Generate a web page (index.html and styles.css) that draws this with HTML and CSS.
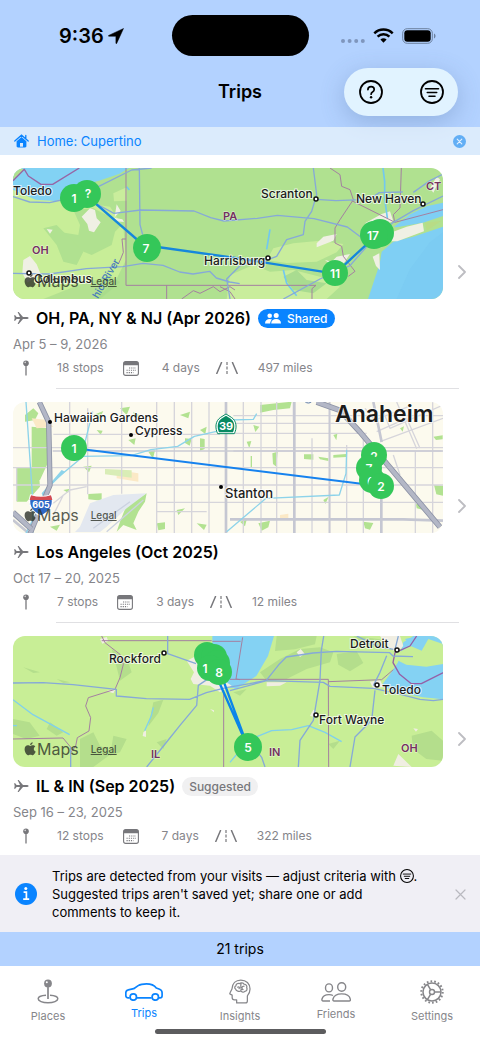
FILE: index.html
```html
<!DOCTYPE html>
<html lang="en">
<head>
<meta charset="utf-8">
<meta name="viewport" content="width=device-width, initial-scale=1">
<title>Trips</title>
<link rel="stylesheet" href="styles.css">
</head>
<body>
<svg class="sprite" aria-hidden="true">
  <symbol id="plane" viewBox="0 0 16 16"><path d="M15.600 8c0 .7-1 1-2.200 1H10L5.700 14H4.600L7 9H3.600L2.200 10.800H1.100L1.700 8 1.100 5.200H2.200L3.600 7H7L4.600 2H5.700L10 7h3.400c1.200 0 2.200.3 2.200 1z" fill="currentColor"/></symbol>
  <symbol id="pin" viewBox="0 0 8 16"><circle cx="4" cy="3.200" r="2.800" fill="currentColor"/><path d="M4 5v10.500" stroke="currentColor" stroke-width="1.300"/><circle cx="3.200" cy="2.400" r=".8" fill="#fff" opacity=".7"/></symbol>
  <symbol id="calendar" viewBox="0 0 16 15"><rect x=".6" y=".6" width="14.800" height="13.800" rx="2.200" fill="none" stroke="currentColor" stroke-width="1.100"/><path d="M.6 4.200V2.800C.6 1.400 1.400.6 2.800.6h10.400c1.400 0 2.200.8 2.200 2.200v1.400z" fill="currentColor"/><path d="M6 7h7M3.500 9.300H13M3.500 11.600h7" stroke="currentColor" stroke-width="1.100" stroke-dasharray="1.200 1"/></symbol>
  <symbol id="road" viewBox="0 0 22 12"><path d="M5.500.5.8 11.500M16.500.5l4.700 11" stroke="currentColor" stroke-width="1.500" stroke-linecap="round"/><path d="M11 0v3M11 4.500v3M11 9v3" stroke="currentColor" stroke-width="1.200"/></symbol>
  <symbol id="chevron" viewBox="0 0 8 14"><path d="m1 1 6 6-6 6" fill="none" stroke="currentColor" stroke-width="1.800" stroke-linecap="round" stroke-linejoin="round"/></symbol>
  <symbol id="filter" viewBox="0 0 24 24"><circle cx="12" cy="12" r="11" fill="none" stroke="currentColor" stroke-width="1.800"/><path d="M5.500 8.700h13M7.300 12.500h9.400M9 16.300h6" stroke="currentColor" stroke-width="1.600" stroke-linecap="round"/></symbol>
  <symbol id="apple" viewBox="0 0 12 14"><path d="M8.700.2c.1 1.400-1.200 2.800-2.600 2.800C5.900 1.600 7.300.3 8.700.2zM6.200 3.900c.7 0 1.500-.7 2.700-.7 1 0 1.900.5 2.400 1.300-2.200 1.200-1.800 4.200.4 5.100-.5 1.400-1.700 3.600-2.900 3.600-.9 0-1.300-.5-2.400-.5s-1.500.5-2.400.5C2.500 13.200.6 10.100.6 7.300c0-2.600 1.600-4.100 3.200-4.100 1.100 0 1.800.7 2.400.7z" fill="currentColor"/></symbol>
</svg>

<div class="app">
  <header class="top">
    <div class="status">
      <div class="status-time"><span>9:36</span>
        <svg width="16" height="16" viewBox="0 0 16 16"><path d="M15.500.5 8.700 15.400c-.2.400-.8.300-.8-.2V8.300L.9 8.200c-.6 0-.7-.6-.2-.8z" fill="#000" stroke="#000" stroke-width=".5" stroke-linejoin="round"/></svg>
      </div>
      <div class="island"></div>
      <div class="status-icons">
        <svg width="24" height="6" viewBox="0 0 24 6" fill="#7f96bd"><circle cx="2" cy="3" r="2"/><circle cx="8.600" cy="3" r="2"/><circle cx="15.200" cy="3" r="2"/><circle cx="21.800" cy="3" r="2"/></svg>
        <svg width="21" height="15" viewBox="0 0 21 15"><path d="M1.300 5.300a13.300 13.300 0 0 1 18.400 0M4.600 8.700a8.500 8.500 0 0 1 11.800 0" fill="none" stroke="#000" stroke-width="2.500"/><path d="M7.400 11.600a4.500 4.500 0 0 1 6.200 0L10.500 14.800z"/></svg>
        <svg width="34" height="16" viewBox="0 0 34 16"><rect x=".7" y=".7" width="29.600" height="14.600" rx="4.500" fill="none" stroke="#6c819f" stroke-width="1"/><rect x="2.300" y="2.300" width="26.400" height="11.400" rx="3"/><path d="M32 5.500c2 .8 2 4.200 0 5z" fill="#6c819f"/></svg>
      </div>
    </div>
    <div class="nav">
      <h1>Trips</h1>
      <div class="nav-actions">
        <button type="button" aria-label="Help"><svg width="24" height="24" viewBox="0 0 24 24"><circle cx="12" cy="12" r="11" fill="none" stroke="#000" stroke-width="1.800"/><path d="M8.900 9.600c.1-1.900 1.400-2.900 3.200-2.900s3.100 1.100 3.100 2.700c0 1.300-.7 1.900-1.700 2.600-1 .6-1.400 1.100-1.400 2.200" fill="none" stroke="#000" stroke-width="1.700" stroke-linecap="round"/><circle cx="12.100" cy="17.200" r="1.200"/></svg></button>
        <button type="button" aria-label="Filter criteria"><svg width="24" height="24"><use href="#filter"/></svg></button>
      </div>
    </div>
  </header>

  <div class="home-bar">
    <svg width="15" height="14" viewBox="0 0 15 14"><path d="M.8 7 7.500 1.200 14.200 7M11.800 1.500v3" fill="none" stroke="currentColor" stroke-width="1.300" stroke-linecap="round"/><path d="M2.600 7.300 7.500 3.100l4.900 4.200V12c0 1-.4 1.400-1.400 1.400H4c-1 0-1.400-.4-1.400-1.400z" fill="currentColor"/><path d="M6 9h3v3.700H6z" fill="#dceafb"/></svg>
    <a href="#home">Home: Cupertino</a>
    <button type="button" aria-label="Clear home filter"><svg width="13" height="13" viewBox="0 0 13 13"><circle cx="6.500" cy="6.500" r="6.500" fill="#62aef5"/><path d="m4.200 4.200 4.600 4.600m0-4.600L4.200 8.800" stroke="#e4f1ff" stroke-width="1.100" stroke-linecap="round"/></svg></button>
  </div>

  <main>
    <ul class="trips">
      <li>
        <div class="trip">
          <div class="trip-body">
            <div class="map">
              <svg class="map-art" viewBox="0 0 430 131" role="img" aria-label="Route map across Ohio, Pennsylvania, New York and New Jersey">
                <g transform="scale(.33333) translate(-39 -24)" fill="none" stroke-linejoin="round">
                  <path fill="#b0e190" d="M39 24h1290v393H39z"/>
                  <path fill="#c8ee98" d="M39 85 190 120l140 20 40 60 8 100-30 60-60 57H39z"/>
                  <path fill="#b0e190" d="m220 150 60-5 40 20 45 30-20 20-10 40-60 30-50-20-50-15-40-45 40 10 60 10 5-30z"/>
                  <path fill="#b0e190" d="m130 205 40-10 30 30 50 50-20 40-40-10-20-50z"/>
                  <path fill="#c9ed9c" d="m340 100 40-18v40l-38 2z"/>
                  <path fill="#a5d98a" d="M130 417l100-40 100-30 30 20-60 50z" opacity=".6"/>
                  <path fill="#c9ed9c" d="m820 265 60-15 80-8 70 10-20 25-60 28-90 4-60-8zM690 345l70-30 50 20 70-5 80 20 60 30-40 37H680z"/>
                  <path fill="#a9dc90" d="m850 350 40-20 30 30 60 10-40 30-60-10z"/>
                  <path fill="#82d2f4" d="M39 24h348l-30 18-60 20-60 15-50 38-20 8-60-4-68-30z"/>
                  <path fill="#b0e190" d="M39 24h22l12 6-34 30z"/>
                  <path fill="#7fcff4" d="m1145 275 35-30 60-15 89-30v217h-225l20-60 15-45zM1182 200l50-38 50-24 47-10v40l-60 20-80 14z"/>
                  <path fill="#73c2ee" d="m1190 417 40-90 60-80 39-30v200z" opacity=".25"/>
                  <path fill="#f0f0e4" d="m1180 215 40-15 48-12 4 26-80 30h-22zM1095 190l50-28 25-8 10 30-30 10-30 20zM245 170l25-25 15 5 5 25 12 12-20 30-15-5-5-20zM70 300l20-12 20 25 12 30-40 25-15-30zM350 133l12 20-20 20 25 5 5 8-30-3zM1118 290l20-10 2 50-12-12zM950 250l20-20 40-8-10 20-50 20zM140 207l18 2-8 12zM1290 85l20-35 10 8-20 40zM975 300l20 5 15-15 40-8-20 30-30 8z"/>
                  <path fill="#b8dc86" d="m1275 188 50-6-45 30z"/>
                  <g stroke="#72c8ef" stroke-width="5"><path d="m1149 24 5 40v50l8 60M810 208l-10 60M850 330l10 40 30 37M380 80l8 10"/></g>
                  <g stroke="#a47fa0" stroke-width="3"><path d="M378 24v352h570M378 237h-12l4 40-8 20-7 15M500 376v41M545 417l35-25 20 8 40-20 20 15 30-15 15 10M990 24l30 20 5 35 25 10 10 30-40 60-15 25v45l20 10 5 30 35 45-20 15M1055 122l130 65 144-38M1204 24l-4 120-20 20 4 22M948 376l-12 10v31M660 380l30 15 15 22"/></g>
                  <path d="M39 62l34-34 12 20 38 25h35l80-49" stroke="#9765a5" stroke-width="4"/>
                  <g stroke="#86a9d8" stroke-width="4"><path d="m39 110 50 16 60 2 35-8M295 80l100-50 60-6M418 24l2 170 8 30M290 132l52 28 80-10 160 3 50 20 40 10 100-8 60-9 110 10 100 25 40 30M39 340l110 2 110-16 110-6 60-10 60 6 50 20 40 6 50-8 20 20 40 12 30 5M940 24l10 80-15 50-20 30-5 40-50 15-30 50-40 15M948 118l60 4 100-4 30-20 70-2M1180 187l60-35 89-44M690 417l-10-60 40-40 60-18M850 417l110-60 90-40 70-80 60-50M1240 97l50-35 39-20"/></g>
                  <path d="m280 125 150 130 270 38 305 48 135-125" stroke="#1687dc" stroke-width="7"/>
                </g>
                <g class="river"><text transform="translate(85 131) rotate(-60)">hio-River</text></g>
                <g class="city">
                  <text x="0" y="27">Toledo</text><text x="248" y="30">Scranton</text><text x="343" y="35">New Haven</text><text x="191" y="97">Harrisburg</text><text x="21" y="115">Columbus</text>
                </g>
                <g class="town-dot"><circle cx="303" cy="31" r="2"/><circle cx="410" cy="36" r="2"/><circle cx="255" cy="90" r="2"/><circle cx="16" cy="105" r="2"/></g>
                <g class="state"><text x="19" y="86">OH</text><text x="210" y="52">PA</text><text x="413" y="22">CT</text></g>
                <g class="stop">
                  <circle cx="74" cy="26" r="14"/><circle cx="61" cy="30" r="14"/><text x="75" y="30">?</text><text x="61" y="35">1</text>
                  <circle cx="134" cy="80" r="14"/><text x="133" y="85">7</text>
                  <circle cx="322" cy="105" r="13"/><text x="322" y="110">11</text>
                  <circle cx="367" cy="65" r="14"/><circle cx="361" cy="67" r="14"/><text x="360" y="72">17</text>
                </g>
              </svg>
              <div class="map-credit"><svg width="12" height="14"><use href="#apple"/></svg><span>Maps</span><a href="#legal">Legal</a></div>
            </div>
            <div class="trip-title"><svg width="16" height="16"><use href="#plane"/></svg><h2>OH, PA, NY &amp; NJ (Apr 2026)</h2>
              <span class="badge shared"><svg width="16" height="11" viewBox="0 0 16 11" fill="#fff"><circle cx="4.700" cy="2.800" r="2.300"/><circle cx="11.200" cy="2.600" r="2.500"/><path d="M0 10.500C0 7.600 2 6 4.700 6c.9 0 1.600.2 2.300.6-1 .9-1.700 2.200-1.800 3.900zM6.200 10.500c0-3 2-4.600 5-4.600s4.800 1.600 4.800 4.600z"/></svg>Shared</span></div>
            <p class="date">Apr 5 – 9, 2026</p>
            <ul class="stats">
              <li><span class="ico"><svg width="8" height="16"><use href="#pin"/></svg></span>18 stops</li>
              <li><span class="ico"><svg width="16" height="15"><use href="#calendar"/></svg></span>4 days</li>
              <li><span class="ico"><svg width="22" height="12"><use href="#road"/></svg></span>497 miles</li>
            </ul>
          </div>
          <a class="open" href="#trip-1" aria-label="Open trip"><svg width="8" height="14"><use href="#chevron"/></svg></a>
        </div>
      </li>

      <li>
        <div class="trip">
          <div class="trip-body">
            <div class="map">
              <svg class="map-art" viewBox="0 0 430 131" role="img" aria-label="Route map around Anaheim and Stanton">
                <g transform="scale(.33333) translate(-39 -21)" fill="none" stroke-linejoin="round">
                  <path fill="#fcfaee" d="M39 21h1290v393H39z"/>
                  <path fill="#b2e291" d="m95 95 50 5 5 90-30 65H95zM50 218l65-3 5 60-40 45H50zM75 60l25-20 15 15-10 20-30 5zM265 297l40-2v22l-40-4zM380 330l60-35-5 25-20 30-15 35 10 20-40-15-20 20 10-30zM780 30l95-10-5 20-50 5-40 8zM280 60l30-12-10 20 8 10zM360 40l30-5-10 25zM400 50l20 12-16 8zM555 130l20 2-6 20-14-8zM600 130l14 2v30l-14 5zM385 135l22-5-4 20zM445 170l20-4-6 25zM290 105l18 2-6 12zM540 60l30-10-5 20zM600 105l20-10-4 22zM250 215l25-3-8 20zM290 320l15 5-10 10zM530 345l25-5-20 20zM470 385l25-3v20l-20 4zM590 385l30 4-8 16zM740 140l14-2-6 22zM817 175l16-5-4 45-10-8zM912 178h28v16l-28-2zM955 185l30 5v8l-25-5zM1000 180l38-3v9l-38 2zM760 90l18 5-12 16zM752 183h4v36h-4zM1000 120l12-4-3 20zM1300 125l28-4v12l-20 2zM1302 270l27 2v30l-20-4zM1248 328l20-2v18l-18-4zM775 385l35-8-5 20-20 10zM970 315l16-10-10 22zM720 380l20-6-5 20zM1090 380l30 4-10 20-15-4zM1200 100l12-6-4 16zM150 395l30-6-10 18zM190 285l20-4-6 12z"/>
                  <path fill="#fbe9c6" d="m95 70 45 5 20 20-50 5zM350 225l65 10v25l-65-10zM840 360l25-4v20l-25-4z"/>
                  <path fill="#d9edb6" d="m315 222 80 4v22l-80-10z"/>
                  <path fill="#e3e8f0" d="m240 395 30-70 70-25 100-5-60 45-60 55-20 16h-75z"/>
                  <path d="m280 400 110-80M320 410l110-95" stroke="#cbd2e0" stroke-width="4"/>
                  <g stroke="#d6d5db" stroke-width="4"><path d="M209 21v393M263 40v258M365 21v275M470 21v393M523 21v393M575 21v393M627 21v393M730 21v393M783 21v393M830 21v393M936 130v284M990 21v393M1040 150v264M1090 130v284M1246 170v244M1298 21v393M39 158h1290M39 218h1290M160 118h500M39 270h1290M470 322h859M700 62h640M700 85h350M700 115h400M700 168h625M470 350h150M880 21v60M50 218v100M1095 40l30 35 100-40M1150 50l20 50 159-70M1140 140l189-70M1130 110l90-40 40 90M1190 21l60 140M1180 180l20 60M160 325l50-40 50-10M190 300l-30 60"/></g>
                  <g stroke="#c5c7d2" stroke-width="8"><path d="M678 21v393M883 21v393M690 373h520l119 4M1144 270v144M1120 21l25 120M39 375l50 42"/></g>
                  <path d="M988 21v393M158 168h1171" stroke="#c9cad4" stroke-width="5"/>
                  <g stroke="#8dd3ea" stroke-width="4"><path d="m78 21 20 290v103M278 50l-35 140-90 75-30 60-45 90M243 184l150-2 60-18 80-10 50-30 90-20M690 75l70-2 10-17M1040 165l-2 70-20 65-220 10-118 100"/></g>
                  <path fill="#8dd3ea" d="m125 295 60-70 10 5-50 50-15 30z"/>
                  <path d="m118 21 28 60 4 190-25 60-35 86" stroke="#8d93a6" stroke-width="16"/>
                  <path d="m118 21 28 60 4 190-25 60-35 86" stroke="#b3b7c6" stroke-width="11"/>
                  <path d="m39 352 55 50M950 21l70 25 60 65 240 285" stroke="#8d93a6" stroke-width="17"/>
                  <path d="m39 352 55 50M950 21l70 25 60 65 240 285" stroke="#b3b7c6" stroke-width="12"/>
                  <circle cx="925" cy="10" r="14" stroke="#5877a8" stroke-width="3"/>
                  <path d="m224 160 860 106" stroke="#1682ee" stroke-width="6"/>
                  <path d="M653 116c-8-16-8-38 9-49l16-10 16 10c17 11 17 33 9 49z" fill="#fff" stroke="#078a62" stroke-width="3"/>
                  <path d="M657 112c-6-14-6-32 7-41l14-9 14 9c13 9 13 27 7 41z" fill="#078a62"/>
                  <path d="M92 300c20 6 44 6 62 0 10 30-2 50-31 63-29-13-41-33-31-63z" fill="#2e69c6" stroke="#fff" stroke-width="4"/>
                  <path d="M93 301c20 6 40 6 60 0l4 14H89z" fill="#d44b50"/>
                </g>
                <g class="shield"><text x="28" y="106">605</text><text class="wide" x="213" y="28">39</text></g>
                <g class="city clear">
                  <text x="41" y="20">Hawaiian Gardens</text><text x="122" y="33">Cypress</text><text class="mid" x="212" y="96">Stanton</text><text class="big" x="322" y="20">Anaheim</text>
                  <circle cx="37" cy="20" r="2"/><circle cx="118" cy="33" r="2"/><circle cx="208" cy="85" r="2"/>
                </g>
                <g class="stop">
                  <circle cx="61" cy="46" r="13"/><text x="61" y="51">1</text>
                  <circle cx="361" cy="53" r="13"/><text x="361" y="59">2</text>
                  <circle cx="356" cy="66" r="13"/><text x="356" y="71">7</text>
                  <circle cx="359" cy="78" r="13"/><text x="358" y="84">6</text>
                  <circle cx="368" cy="84" r="13"/><text x="368" y="89">2</text>
                </g>
              </svg>
              <div class="map-credit"><svg width="12" height="14"><use href="#apple"/></svg><span>Maps</span><a href="#legal">Legal</a></div>
            </div>
            <div class="trip-title"><svg width="16" height="16"><use href="#plane"/></svg><h2>Los Angeles (Oct 2025)</h2></div>
            <p class="date">Oct 17 – 20, 2025</p>
            <ul class="stats">
              <li><span class="ico"><svg width="8" height="16"><use href="#pin"/></svg></span>7 stops</li>
              <li><span class="ico"><svg width="16" height="15"><use href="#calendar"/></svg></span>3 days</li>
              <li><span class="ico"><svg width="22" height="12"><use href="#road"/></svg></span>12 miles</li>
            </ul>
          </div>
          <a class="open" href="#trip-2" aria-label="Open trip"><svg width="8" height="14"><use href="#chevron"/></svg></a>
        </div>
      </li>

      <li>
        <div class="trip">
          <div class="trip-body">
            <div class="map">
              <svg class="map-art" viewBox="0 0 430 131" role="img" aria-label="Route map across Illinois and Indiana">
                <g transform="scale(.33333) translate(-39 -21)" fill="none" stroke-linejoin="round">
                  <path fill="#c8ee96" d="M39 21h1290v393H39z"/>
                  <path fill="#b4de8c" d="m335 60 20 15 30 25 10 30-35 25-10-40zM240 330l40-20 20 40 40 20-60 44h-40zM39 270l50 10 30 40-40 10-40-15zM460 220l30-8-15 40-30 40zM150 280l40 30-20 10-30-20zM70 115l50 15-20 2zM170 150l40 10-20 2zM470 340l30-10-10 30zM340 320l40 10-20 40-30 10zM780 130l60-40 60-30 60-5 40 15-10 30-70 20-60 30-60 5zM1010 75l60-8 20 35-40 25-35-20zM1235 320l60-15 34 30v60l-50-5-40-30zM830 21h120l-5 25-60 15-60 5zM1060 21l80 10 20 30-60-10zM985 345l35-10-20 25zM700 190l40-10-20 20z"/>
                  <path fill="#84d2f3" d="M637 21h185l-18 60-35 60-60 38-25-6-47-90z"/>
                  <path fill="#84d2f3" d="m1210 40 30-19h89v190l-60-6-75-15-50-20 30-40 20-30zM1215 30l40-9 10 20-35 5z"/>
                  <path fill="#c8ee96" d="m1190 75 40-25 35 15 20-35 44 15v60l-50 8-60-6-30-15z"/>
                  <path fill="#f0eee2" d="m560 95 30-15 60 60 45 30-35 20-30-20-50-5-8-15 10-20zM1140 21h60l10 30-20 20-30-20zM300 30l20-6 5 12-18 8zM320 186l28-8-8 15zM430 310l8-6v20l-10-3zM630 240l12 4v6zM890 70l12-10 12 14-14 10zM1110 158l30-5 10 20-30 6zM1180 410l15-35 40 39zM800 160l60 0-20 10-40 2zM930 260l10-18 10 8-8 14zM1240 298l14 2-6 8z"/>
                  <g stroke="#80d0ec" stroke-width="4"><path d="m460 235-6 25-20 45M39 212l60 45 110 60M765 325l50-20 60-3 50-12 50 20 50 28M690 400l25-30 40-20M39 290h12"/></g>
                  <g stroke="#a47fa0" stroke-width="3"><path d="M305 35h330M305 21l10 20 45 35 10 30-10 40-15 35-80 25-8 25 15 35-5 40-35 20-5 25-15 20M39 330l150-3 25 30M671 190v224M690 151h295l1 263M985 158l160-6 35-30M720 152l-12-2 20-125M637 37h85"/></g>
                  <path d="m1250 21-20 30-45 20-6 30 20 35 35 28h30l75-38" stroke="#955fa6" stroke-width="4"/>
                  <g stroke="#86a9d8" stroke-width="4"><path d="m39 162 90-1 90 6 130 14v20l90 8 130 2 50-20 60-15 70-12 50-10 40-50 20-20 80-12 70-5 160 4 10 10 60 2M503 21v53l85 30M212 414v-60M440 414l60-75 40-50 50-60 5-60 30-20M895 414l5-80 40-60 20-120 4-90 10-60M1050 414l15-90 50-50 10-90M690 185l110-30 170 5 20 12 130 6 70 15 70 18 40 4 79-10M1120 170l20-40 20-50M750 340l35 45 10 29M1195 21l-10 40M1070 21l60 30 50 10"/></g>
                  <path d="m640 120 104 235-72-195" stroke="#0b85e8" stroke-width="7"/>
                </g>
                <g class="city">
                  <text x="96" y="27">Rockford</text><text x="337" y="12">Detroit</text><text x="369" y="58">Toledo</text><text x="306" y="88">Fort Wayne</text>
                </g>
                <g class="town-dot"><circle cx="151" cy="17" r="2"/><circle cx="384" cy="14" r="2"/><circle cx="364" cy="49" r="2"/><circle cx="303" cy="79" r="2"/></g>
                <g class="state"><text x="138" y="122">IL</text><text x="256" y="120">IN</text><text x="388" y="116">OH</text></g>
                <g class="stop">
                  <circle cx="194" cy="19" r="13"/><circle cx="201" cy="21" r="13"/><circle cx="204" cy="27" r="13"/><circle cx="197" cy="32" r="13"/><circle cx="206" cy="36" r="13"/><text x="192" y="37">1</text><text x="206" y="41">8</text>
                  <circle cx="235" cy="111" r="14"/><text x="235" y="116">5</text>
                </g>
              </svg>
              <div class="map-credit"><svg width="12" height="14"><use href="#apple"/></svg><span>Maps</span><a href="#legal">Legal</a></div>
            </div>
            <div class="trip-title"><svg width="16" height="16"><use href="#plane"/></svg><h2>IL &amp; IN (Sep 2025)</h2><span class="badge">Suggested</span></div>
            <p class="date">Sep 16 – 23, 2025</p>
            <ul class="stats">
              <li><span class="ico"><svg width="8" height="16"><use href="#pin"/></svg></span>12 stops</li>
              <li><span class="ico"><svg width="16" height="15"><use href="#calendar"/></svg></span>7 days</li>
              <li><span class="ico"><svg width="22" height="12"><use href="#road"/></svg></span>322 miles</li>
            </ul>
          </div>
          <a class="open" href="#trip-3" aria-label="Open trip"><svg width="8" height="14"><use href="#chevron"/></svg></a>
        </div>
      </li>
    </ul>
  </main>

  <aside class="notice">
    <svg width="22" height="22" viewBox="0 0 22 22"><circle cx="11" cy="11" r="11" fill="#0a84ff"/><circle cx="10.800" cy="5.600" r="1.500" fill="#fff"/><path d="M8.600 9.200h2.800v6.600M8.200 16.100h6" fill="none" stroke="#fff" stroke-width="1.700"/></svg>
    <p>Trips are detected from your visits — adjust criteria with <svg class="inline-icon" width="14" height="14"><use href="#filter"/></svg>. Suggested trips aren't saved yet; share one or add comments to keep it.</p>
    <button type="button" aria-label="Dismiss"><svg width="11" height="11" viewBox="0 0 11 11"><path d="m1 1 9 9m0-9-9 9" stroke="#b9b9bf" stroke-width="1.200" stroke-linecap="round"/></svg></button>
  </aside>
  <div class="count">21 trips</div>

  <nav class="tabs">
    <a href="#places"><svg width="22" height="25" viewBox="0 0 22 25" fill="none" stroke="currentColor"><path d="M9 16.300c-4.600.3-7.800 1.600-7.800 3.500 0 2.200 4.200 3.900 9.800 3.900s9.800-1.700 9.800-3.900c0-1.900-3.200-3.200-7.800-3.500" stroke-width="1.500"/><path d="M11 7v13" stroke-width="1.700"/><circle cx="11" cy="4.400" r="3.900" fill="currentColor" stroke="none"/><circle cx="9.800" cy="3.300" r="1" fill="#fff" stroke="none"/></svg>Places</a>
    <a href="#trips" class="active" aria-current="page"><svg width="38" height="18" viewBox="0 0 38 18" fill="none" stroke="currentColor" stroke-width="1.700" stroke-linejoin="round"><path d="M4.600 14.800H2.800c-1.300 0-2-.8-2-2.200V9.800c0-1.600.9-2.500 2.500-2.900l5.400-1.200 4.500-3.100C15.300 1.300 17.700.9 21.500.9c4.800 0 7.600 1.200 9.800 4.100l3.300 1.200c1.700.7 2.500 1.700 2.500 3.500v3c0 1.300-.7 2.100-2 2.100h-1.300M12 14.800h14.600"/><circle cx="8.300" cy="14" r="3.200"/><circle cx="30.300" cy="14" r="3.200"/></svg>Trips</a>
    <a href="#insights"><svg width="22" height="25" viewBox="0 0 23 26" fill="none" stroke="currentColor" stroke-width="1.300" stroke-linecap="round" stroke-linejoin="round"><path d="M8 25v-3.200H5.700c-1.700 0-2.400-.9-2.400-2.500v-2.500l-2-1c-.6-.4-.6-.8-.2-1.500l2-4C3.400 4.500 7 1 12.300 1 18 1 22 4.900 22 10.500c0 3-1.200 5.300-2.800 7V23c0 1.200-.6 2-2 2z"/><path d="M7 10.500c-1.500-.7-1.200-3 .2-3.400.1-2 2-3 3.600-2.300 1.600-1.400 4.200-1 4.900.6 2.300.1 3.500 1.800 2.800 3.600 1 1.800-.1 3.700-2 3.800-1 1.300-3.100 1.200-3.900-.3-1.900.9-5.300.1-5.600-2zM9 8.500c1.500-1.300 2.500.5 1.500 1.500M12.600 5c-1 2 .5 2.500-.3 4.400M15.700 7.500c-2.500 0-3 2.500-1 3.500M12.600 12.500c-.8-1.300.6-2.300 1.700-1.500"/></svg>Insights</a>
    <a href="#friends"><svg width="30" height="20" viewBox="0 0 30 20" fill="none" stroke="currentColor" stroke-width="1.400" stroke-linejoin="round"><ellipse cx="8" cy="5.900" rx="3.500" ry="4"/><ellipse cx="20.700" cy="5" rx="4" ry="4.300"/><path d="M9 19H2.200c-1.100 0-1.500-.8-1.200-2 .6-2.500 3.200-4.400 7-4.400 1.600 0 2.900.3 4 .9M13.200 19c-1.200 0-1.500-.8-1.200-2 .7-2.900 3.900-5.100 8.700-5.100s8 2.200 8.600 5.100c.3 1.200 0 2-1.200 2z"/></svg>Friends</a>
    <a href="#settings"><svg width="24" height="24" viewBox="0 0 24 24" fill="none" stroke="currentColor"><circle cx="12" cy="12" r="9" stroke-width="1.500"/><circle cx="12" cy="12" r="10.700" stroke-width="2" stroke-dasharray="1.700 2.035"/><circle cx="12" cy="12" r="2.500" stroke-width="1.400"/><path d="M14.500 12H21M10.700 9.900 7.400 4.300M10.700 14.100l-3.300 5.600" stroke-width="1.500"/></svg>Settings</a>
    <span class="home-indicator"></span>
  </nav>
</div>
</body>
</html>
```

FILE: styles.css
```css
* { box-sizing: border-box; }
body {
  margin: 0;
  background: #fff;
  color: #000;
  font-family: Inter, "Liberation Sans", sans-serif;
  font-size: 13px;
}
h1, h2, p, ul { margin: 0; padding: 0; }
ul { list-style: none; }
svg { display: block; flex: none; }
a { color: inherit; text-decoration: none; }
button { margin: 0; padding: 0; border: 0; background: none; color: inherit; font: inherit; }
.sprite { position: absolute; width: 0; height: 0; }

.app { display: flex; flex-direction: column; min-height: 100vh; }

.top { background: #b3d2ff; padding: 15px 22px 11px; }
.status { display: grid; grid-template-columns: 1fr 137px 1fr; align-items: center; }
.status-time { display: flex; align-items: center; gap: 4px; padding-left: 37px; font-size: 20px; font-weight: 600; line-height: 24px; }
.island { height: 41px; border-radius: 21px; background: #000; }
.status-icons { display: flex; align-items: center; justify-content: flex-end; gap: 8px; padding-right: 22px; }
.status-icons svg:first-child { align-self: flex-end; }
.nav { display: grid; grid-template-columns: 1fr auto 1fr; align-items: center; margin-top: 12px; }
.nav h1 { grid-column: 2; font-size: 18px; font-weight: 600; line-height: 24px; }
.nav-actions {
  justify-self: end;
  display: flex;
  justify-content: space-between;
  width: 114px;
  height: 48px;
  padding: 0 14px 0 15px;
  border-radius: 24px;
  background: #e1f3ff;
  box-shadow: 0 6px 24px rgba(70, 100, 150, .3);
}

.home-bar { display: flex; align-items: center; gap: 8px; height: 28px; padding: 0 14px; background: rgba(207, 228, 251, .75); color: #0a84ff; font-size: 13px; }
.home-bar button { margin-left: auto; }

main { flex: 1; }
.trip { display: flex; }
.trip-body { flex: 1; min-width: 0; padding: 13px 0 10px 13px; }
.trips > li::after { content: ""; display: block; height: 1px; margin: 0 21px 0 56px; background: #e0e0e3; }
.trips > li:last-child::after { display: none; }
.trips > li:last-child .trip-body { padding-bottom: 9px; }
.open { display: flex; align-items: center; justify-content: center; width: 37px; color: #bdbdc2; }

.map { position: relative; overflow: hidden; border-radius: 12px; }
.map-art { width: 100%; height: auto; }
.map-art text { font-weight: 500; font-size: 12px; }
.city text { fill: #1b1b1b; stroke: #fff; stroke-width: 2px; stroke-opacity: .7; paint-order: stroke; }
.map-art .mid { font-size: 13px; }
.map-art .big { font-size: 23px; font-weight: 600; }
.town-dot circle { fill: #fff; stroke: #111; stroke-width: 1.500px; }
.map-art .state text { fill: #73315f; font-size: 11px; font-weight: 600; stroke: #fff; stroke-width: 1px; stroke-opacity: .6; paint-order: stroke; }
.map-art .river text { fill: #4579bd; font-size: 10px; }
.stop circle { fill: #34c759; }
.map-art .stop text { fill: #fff; font-size: 12px; font-weight: 600; text-anchor: middle; }
.map-art .shield text { fill: #fff; font-size: 9px; font-weight: 700; text-anchor: middle; }
.map-art .shield .wide { font-size: 11px; }
.map-credit { position: absolute; left: 11px; bottom: 8px; display: flex; align-items: center; color: rgba(45, 50, 40, .8); font-size: 16px; line-height: 20px; }
.map-credit span { margin-left: 1px; }
.map-credit a { margin-left: 12px; font-size: 10px; font-weight: 500; text-decoration: underline; }

.trip-title { display: flex; align-items: center; gap: 7px; height: 24px; margin-top: 7px; color: #77777b; }
.trip-title h2 { color: #000; font-size: 16px; font-weight: 600; line-height: 24px; }
.badge { display: flex; align-items: center; gap: 6px; height: 19px; padding: 0 7px; border-radius: 10px; background: #f0f0f1; color: #77777b; font-size: 12px; font-weight: 500; }
.shared { background: #0a84ff; color: #fff; }
.date { margin-top: 4px; color: #85858a; font-size: 13px; line-height: 20px; }
.stats { display: flex; gap: 14px; margin-top: 4px; color: #85858a; font-size: 12px; line-height: 20px; }
.stats li { display: flex; align-items: center; gap: 18px; }
.ico { display: flex; justify-content: center; width: 26px; color: #77777b; }

.notice { display: flex; align-items: center; padding: 12px 14px 11px 15px; background: #f0eff5; }
.notice p { flex: 1; margin: 0 27px 0 15px; font-size: 13px; line-height: 18px; }
.inline-icon { display: inline-block; vertical-align: -2px; }
.count { background: #b3d2ff; font-size: 14px; line-height: 34px; text-align: center; }

.tabs { position: relative; display: flex; align-items: center; padding: 1px 0 8px; background: #fff; color: #86868a; font-size: 11px; line-height: 14px; }
.tabs a { flex: 1; display: flex; flex-direction: column; align-items: center; justify-content: center; gap: 5px; height: 68px; }
.tabs .active { color: #0a84ff; }
.home-indicator { position: absolute; left: 50%; bottom: 9px; width: 171px; height: 5px; margin-left: -85px; border-radius: 3px; background: #5c5c5e; }
```
